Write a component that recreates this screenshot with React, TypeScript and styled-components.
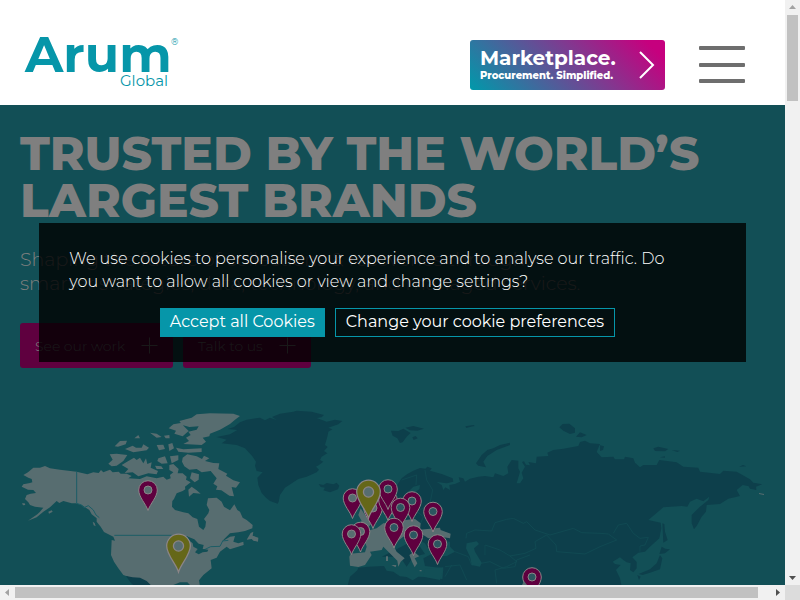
import React from "react";
import styled, { createGlobalStyle } from "styled-components";

const teal = "#0696a9";
const sea = "#124f56";
const land = "#576d70";
const darkLand = "#0d3f4b";
const berry = "#5f003f";
const grey = "#7f7f7f";

const GlobalStyle = createGlobalStyle`
  *, *::before, *::after { box-sizing: border-box; }
  body {
    margin: 0;
    overflow: hidden;
    font-family: Montserrat, Inter, "Open Sans", sans-serif;
  }
`;

const Frame = styled.div`
  display: grid;
  grid-template-columns: minmax(0, 1fr) 15px;
  grid-template-rows: minmax(0, 1fr) 15px;
  height: 100vh;
`;

const Viewport = styled.div`
  position: relative;
  overflow: hidden;
  background: ${sea};
`;

const ScrollTrack = styled.div<{ $vertical?: boolean }>`
  display: flex;
  flex-direction: ${(p) => (p.$vertical ? "column" : "row")};
  align-items: center;
  background: #f1f1f1;
`;

const ScrollArrow = styled.svg`
  display: block;
  flex: none;
  width: 15px;
  height: 15px;
`;

const ScrollRun = styled.div<{ $vertical?: boolean }>`
  display: flex;
  flex-direction: ${(p) => (p.$vertical ? "column" : "row")};
  flex: 1;
`;

const ScrollThumb = styled.div<{ $vertical?: boolean }>`
  background: #c1c1c1;
  width: ${(p) => (p.$vertical ? "11px" : "calc(100% - 12px)")};
  height: ${(p) => (p.$vertical ? "86px" : "11px")};
`;

const ScrollCorner = styled.div`
  background: #dcdcdc;
`;

const Header = styled.header`
  display: flex;
  align-items: center;
  height: 105px;
  padding: 0 40px 0 24px;
  background: #fff;
`;

const LogoLink = styled.a`
  margin-right: auto;
  line-height: 0;
`;

const LogoMark = styled.svg`
  width: 160px;
  height: 72px;
  margin-top: 8px;
  fill: ${teal};
`;

const MarketplaceLink = styled.a`
  display: flex;
  align-items: center;
  justify-content: space-between;
  width: 195px;
  height: 50px;
  margin: 25px 34px 0 0;
  padding: 0 10px;
  border-radius: 3px;
  color: #fff;
  text-decoration: none;
  background: linear-gradient(45deg, #0099aa, #84368f 60%, #c6007e 92%);
`;

const MarketplaceText = styled.span`
  display: grid;
  font-size: 10px;
  font-weight: 800;
  line-height: 14px;
  white-space: nowrap;
`;

const MarketplaceName = styled.strong`
  font-size: 20px;
  font-weight: 700;
  line-height: 22px;
`;

const MenuButton = styled.button`
  display: flex;
  flex-direction: column;
  justify-content: space-between;
  width: 46px;
  height: 37px;
  margin-top: 24px;
  padding: 0;
  border: 0;
  background: none;
`;

const MenuBar = styled.span`
  height: 4px;
  border-radius: 1px;
  background: #6e6e6e;
`;

const Hero = styled.section`
  padding: 25px 20px 0;
  color: ${grey};
`;

const Title = styled.h1`
  margin: 0 0 24px;
  font-size: 47px;
  font-weight: 800;
  line-height: 47px;
`;

const Lead = styled.p`
  margin: 0 0 27px;
  font-size: 19px;
  font-weight: 300;
  line-height: 24px;
`;

const HeroActions = styled.div`
  display: flex;
  gap: 10px;
`;

const HeroLink = styled.a`
  display: flex;
  align-items: center;
  gap: 16px;
  height: 45px;
  padding: 0 15px;
  border-radius: 3px;
  color: ${grey};
  background: ${berry};
  font-size: 14px;
  font-weight: 300;
  text-decoration: none;
`;

const Map = styled.svg`
  display: block;
  width: 100%;
`;

const CookieLayer = styled.div`
  position: absolute;
  inset: 0;
  display: flex;
  align-items: center;
  justify-content: center;
`;

const CookieBox = styled.div`
  width: 90%;
  padding: 24px 40px 25px 30px;
  color: #fff;
  background: rgba(0, 0, 0, 0.8);
`;

const CookieText = styled.p`
  margin: 0 0 15px;
  padding-right: 10px;
  font-size: 16px;
  font-weight: 300;
  line-height: 23px;
`;

const CookieActions = styled.div`
  display: flex;
  justify-content: center;
  gap: 10px;
`;

const CookieButton = styled.button<{ $filled?: boolean }>`
  height: 29px;
  padding: 0 ${(p) => (p.$filled ? "9px" : "10px")} 2px;
  border: 1px solid ${teal};
  color: #fff;
  background: ${(p) => (p.$filled ? teal : "transparent")};
  font: 400 16px Montserrat, Inter, sans-serif;
  white-space: nowrap;
`;

const Logo = () => (
  <LogoMark viewBox="0 0 160 72" role="img" aria-label="Arum Global">
    <text x="1" y="51" fontWeight="700" fontSize="50">Arum</text>
    <text x="96" y="65" fontSize="15">Global</text>
    <text x="147" y="24" fontSize="9">®</text>
  </LogoMark>
);

const Plus = () => (
  <svg width="17" height="17" viewBox="0 0 17 17" stroke={grey} aria-hidden="true">
    <path d="M8.5 .5v16M.5 8.5h16" />
  </svg>
);

const Arrow = ({ d, muted }: { d: string; muted?: boolean }) => (
  <ScrollArrow viewBox="0 0 15 15" aria-hidden="true">
    <path d={d} fill={muted ? "#a3a3a3" : "#505050"} />
  </ScrollArrow>
);

type PinSpec = { x: number; y: number; major?: boolean };

const pins: PinSpec[] = [
  { x: 148, y: 490 },
  { x: 178.5, y: 546, major: true },
  { x: 373, y: 508 },
  { x: 388, y: 500 },
  { x: 352.5, y: 498 },
  { x: 388, y: 489 },
  { x: 412, y: 501 },
  { x: 400.5, y: 507.5 },
  { x: 433, y: 511.5 },
  { x: 394, y: 527.5 },
  { x: 413.5, y: 535 },
  { x: 437.5, y: 544 },
  { x: 360.5, y: 531.5 },
  { x: 351.5, y: 534 },
  { x: 368.5, y: 492, major: true },
  { x: 532, y: 577 },
];

const Pin = ({ x, y, major }: PinSpec) => (
  <g transform={`translate(${x} ${y}) scale(${major ? 1.27 : 1})`} stroke="#8b8587" strokeWidth="1">
    <path
      d="M0 20.5C-2 14-9.3 7-9.3 0A9.3 9.3 0 0 1 9.3 0C9.3 7 2 14 0 20.5Z"
      fill={major ? "#656718" : berry}
    />
    <circle r="4" fill={x > 380 ? "#2b5660" : land} />
  </g>
);

const WorldMap = () => (
  <Map viewBox="0 368 785 217" role="img" aria-label="Map of client locations">
    {/* North America */}
    <g transform="translate(0 395) scale(.33333)" fill={land}>
      <path d="M70 240L84 232L100 218L120 218L135 213L150 220L180 224L230 230L262 238L280 232L296 234L303 225L310 232L330 224L338 232L356 230L362 236L380 236L395 243L385 250L420 252L440 244L470 250L490 245L500 254L512 250L510 240L520 232L508 225L508 210L520 207L536 222L533 235L548 235L560 245L558 254L572 262L555 275L556 283L548 288L530 295L522 312L517 318L516 335L525 345L550 352L565 355L578 367L592 372L597 395L610 405L616 395L618 380L612 372L625 355L628 345L620 330L624 310L650 308L665 320L672 335L690 346L703 328L712 345L720 350L728 368L740 375L758 390L757 400L735 408L715 412L690 415L675 430L665 440L690 425L705 423L700 440L715 445L730 440L731 450L690 463L680 455L660 470L650 488L632 495L635 520L610 540L597 556L600 575L570 570L562 562L540 562L520 570L400 572L385 545L370 540L355 520L342 500L333 480L335 435L345 437L340 425L312 411L302 395L290 380L290 370L275 358L268 345L245 330L228 325L215 325L190 318L178 324L170 318L150 337L130 350L110 367L84 377L112 358L120 350L130 338L105 335L90 330L85 322L75 312L80 300L92 296L108 294L100 285L84 284L65 275L70 268L90 264L97 262L95 252L85 248Z" />
      <path d="M325 206L338 194L329 178L350 176L382 180L370 198L350 212L335 214Z M365 210L385 198L402 188L410 195L420 188L430 205L438 190L442 207L455 202L452 218L474 228L470 238L445 235L415 244L398 232L374 234L385 222Z M344 154L360 138L381 137L377 148L354 155Z M375 162L398 152L408 158L425 158L430 148L447 158L440 166L400 172Z M403 130L415 120L420 130Z M450 113L470 116L485 126L470 128Z M470 150L490 149L495 162L477 166Z M492 122L508 120L509 130L497 130Z M505 148L517 144L522 160L508 168Z M528 158L550 163L605 160L605 171L565 173L535 170Z M506 100L520 88L542 84L566 108L548 124L523 116L528 107Z M538 78L575 68L590 58L630 55L700 56L720 63L705 74L690 87L660 104L630 116L628 124L608 128L618 140L605 150L550 147L567 138L558 128L572 120L565 110L590 104L596 94L568 96L547 90Z M475 190L495 184L503 205L485 206L472 198Z M510 184L535 181L535 195L515 205Z M465 212L484 214L490 222L470 222Z M548 188L562 178L590 184L606 192L612 182L628 190L615 198L640 204L658 205L655 222L682 236L678 242L700 256L720 262L708 278L695 276L702 304L688 302L664 286L648 284L652 274L640 266L650 250L632 228L605 232L590 222L568 224L553 214L546 200Z M575 232L597 238L596 254L584 262L570 250Z M565 284L575 275L590 286L602 296L580 294L567 305Z M740 434L752 414L760 410L758 422L775 428L774 440L760 437L755 432Z M66 325l8 0l2 5l-7 1z M145 350l10-4l3 4l-11 6z M278 380l6 4l3 10l-6-3z" />
      <path d="M378 543L398 547L420 548L440 558L454 572H400L390 560Z" fill={darkLand} />
      <path d="M230 230V325L245 330L252 338L265 332L280 345L288 360L298 368M343 421H515L540 426L563 425M590 470L605 468L632 455L660 454L668 438L685 436" fill="none" stroke="#1c5d66" strokeWidth="3" />
      <path d="M560 424L583 433L596 446L611 450L608 462L625 464L622 470L608 472L596 478L585 472L593 462L580 455L578 445L567 436Z" fill={sea} />
    </g>
    {/* Greenland, Iceland and Svalbard */}
    <g transform="translate(210 395) scale(.33333)" fill={darkLand}>
      <path d="M20 126L60 118L82 105L54 102L72 96L90 82L110 74L150 68L165 76L180 68L200 75L186 66L210 56L250 50L260 47L305 50L342 60L335 67L320 69L350 80L375 74L397 78L385 88L355 98L367 103L355 110L352 125L345 150L353 156L342 168L352 175L335 185L330 195L340 200L327 210L318 215L327 224L320 232L290 245L265 252L250 262L225 278L210 300L206 320L203 326L180 318L168 308L155 294L145 270L142 248L158 232L140 228L135 212L138 200L127 184L105 160L80 150L35 145L50 134Z" />
      <path d="M326 267L340 270L350 264L370 268L380 263L388 272L384 283L360 292L340 286L345 278L332 276Z M543 107L565 108L580 101L602 114L590 125L578 142L570 144L562 130L548 122Z M586 98L610 93L642 101L622 107L600 106Z M607 127l10-4l6 7l-12 5z M766 94l25-4l3 3l-15 3l-10 3z" />
      <path d="M412 575L420 545L442 526L445 518L475 515L522 513L530 527L550 530L570 544L590 546L608 556L625 545L650 546L690 551L720 555V575Z" />
    </g>
    {/* Asia and eastern Europe */}
    <g transform="translate(400 400) scale(.33333)">
      <path fill={darkLand} d="M-15 300L-28 288L-12 260L5 235L22 222L40 212L60 204L76 206L82 200L95 205L90 212L125 222L158 235L160 245L140 250L110 246L125 255L130 270L136 262L150 270L148 255L165 252L180 245L176 232L190 235L195 245L210 236L235 230L255 228L280 232L285 220L310 228L325 220L322 200L335 180L355 182L355 205L360 215L350 250L360 250L370 235L365 218L375 200L366 186L372 184L378 194L390 196L385 186L408 190L410 170L445 168L442 158L460 150L490 146L535 138L540 126L555 122L570 130L600 132L590 156L605 172L640 170L645 178L672 178L675 170L700 175L705 188L720 202L730 195L770 195L778 180L830 187L850 200L895 203L900 215L960 222L970 212L1010 215L1050 238L1060 248L1087 253L1068 260L1069 270L1050 266L1046 259L1028 255L1010 270L1020 288L985 296L960 312L920 315L918 335L905 350L890 378L882 388L875 370L875 345L900 320L925 300L928 290L910 304L890 296L870 305L862 320L845 318L790 322L745 360L782 368L784 385L778 415L750 440L735 455L715 458L697 472L710 486L710 505L700 517L690 510L692 490L680 487L670 480L660 472L638 485L645 492L662 495L648 510L660 535L665 560H125L130 505L75 498L70 475L95 462L75 430L20 400L-50 440L-58 400L0 340Z M228 190L245 165L262 150L280 145L300 135L330 128L330 135L290 150L262 168L250 185L258 202L235 197Z M478 82L488 72L508 71L525 85L525 98L510 102L490 92Z M528 110L540 97L560 105L545 112Z M600 136L612 139L609 150L600 153Z M760 145L775 140L805 147L795 154L765 153Z M815 150L840 152L832 156Z M780 172l15-3v4z M1017 200l12-5l10 4z M787 370L793 372L795 395L803 420L790 428Z M785 440L796 446L810 448L795 460L778 462Z M780 465L787 475L780 508L750 518L728 525L716 522L750 508L770 490Z M712 525l10 5l-5 10z M-55 470L20 432L60 440L75 462L40 470L20 500L0 470Z" />
      <path fill={sea} d="M200 430L230 424L237 432L222 445L225 455L245 488L240 500L215 495L210 470L198 445Z M95 432L115 420L150 425L150 440L165 455L140 468L100 468Z M40 260L60 255L58 268L40 280L30 300L40 310L10 312L15 285Z M75 506L130 502L120 540L70 530Z" />
      <path fill="none" stroke={sea} strokeWidth="2" d="M198 415L200 400L225 390L275 393L285 368L320 358L340 355L370 370L380 365L405 390L450 405L520 385L545 398L600 400L625 402L650 420L600 440L555 462L470 455L468 435L440 405L405 425L408 445L375 460L330 468L300 450L255 435L255 465M330 468L350 485L320 500L285 510L290 550M165 455L205 470L215 495L270 485L310 505L345 500L350 480L390 465M135 500L180 495L200 540M155 495L135 530M640 400L655 375L680 370L700 400L720 415L745 412L735 435L720 438V455M75 210L80 240L98 270L90 310L60 330M5 240L50 225L48 255M60 375L70 350L45 330" />
    </g>
    {/* Western Europe */}
    <g transform="translate(210 395) scale(.33333)" fill={land}>
      <path d="M447 430L470 408L500 400L520 385L560 382L585 375L615 372L632 385L630 404L690 398L692 405L722 416L720 430L690 425L655 430L640 420L600 412L580 425L560 440L548 448L560 470L584 490L572 500L565 515L562 497L535 470L520 455L515 465L480 470L485 480L465 510L445 516L420 512L418 485L422 476L465 472L470 455L465 440Z M435 398L455 378L445 360L452 340L465 360L485 385L470 402Z M598 480L612 470L628 484L614 490L622 505L614 517L606 500Z M528 484h6v14h-6z M629 525l6 1v3h-6z M544 510l15 0l-2 7z" />
    </g>
    {pins.map((pin) => (
      <Pin key={`${pin.x}-${pin.y}`} {...pin} />
    ))}
    <path d="M522 585l2-4l3 4z M759 493l5 1v1l-5-1z" fill={land} />
  </Map>
);

export default function App() {
  return (
    <>
      <GlobalStyle />
      <Frame>
        <Viewport>
          <Header>
            <LogoLink href="#home"><Logo /></LogoLink>
            <MarketplaceLink href="#marketplace">
              <MarketplaceText>
                <MarketplaceName>Marketplace.</MarketplaceName>
                Procurement. Simplified.
              </MarketplaceText>
              <svg width="16" height="28" viewBox="0 0 16 28" fill="none" stroke="#fff" strokeWidth="2" aria-hidden="true">
                <path d="M1 1L14 14L1 27" />
              </svg>
            </MarketplaceLink>
            <MenuButton aria-label="Open menu">
              <MenuBar />
              <MenuBar />
              <MenuBar />
            </MenuButton>
          </Header>
          <main>
            <Hero>
              <Title>TRUSTED BY THE WORLD’S LARGEST BRANDS</Title>
              <Lead>
                Shaping the future of collections &amp; recoveries through
                <br />
                smarter strategies, data, technology, and managed services.
              </Lead>
              <HeroActions>
                <HeroLink href="#work">See our work <Plus /></HeroLink>
                <HeroLink href="#contact">Talk to us <Plus /></HeroLink>
              </HeroActions>
            </Hero>
            <WorldMap />
          </main>
          <CookieLayer>
            <CookieBox role="dialog" aria-label="Cookie consent">
              <CookieText>
                We use cookies to personalise your experience and to analyse our traffic. Do you want to allow all
                cookies or view and change settings?
              </CookieText>
              <CookieActions>
                <CookieButton $filled>Accept all Cookies</CookieButton>
                <CookieButton>Change your cookie preferences</CookieButton>
              </CookieActions>
            </CookieBox>
          </CookieLayer>
        </Viewport>
        <ScrollTrack $vertical>
          <Arrow d="M7.5 5L11 9H4Z" muted />
          <ScrollRun $vertical><ScrollThumb $vertical /></ScrollRun>
          <Arrow d="M7.5 10L11 6H4Z" />
        </ScrollTrack>
        <ScrollTrack>
          <Arrow d="M5 7.5L9 4V11Z" muted />
          <ScrollRun><ScrollThumb /></ScrollRun>
          <Arrow d="M10 7.5L6 4V11Z" />
        </ScrollTrack>
        <ScrollCorner />
      </Frame>
    </>
  );
}
